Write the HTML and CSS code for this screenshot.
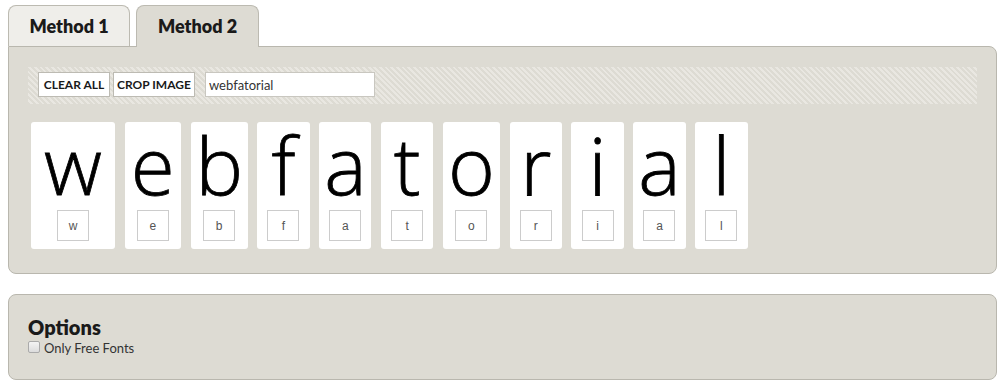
FILE: index.html
```html
<!DOCTYPE html>
<html>
<head>
<meta charset="utf-8">
<link rel="stylesheet" href="styles.css">
</head>
<body>
<div class="tabs">
  <div class="tab">Method 1</div>
  <div class="tab active">Method 2</div>
</div>
<div class="panel main">
  <div class="toolbar">
    <button class="btn btn-clear">CLEAR ALL</button>
    <button class="btn btn-crop">CROP IMAGE</button>
    <input class="txt" type="text" value="webfatorial">
  </div>
  <div class="cards">
    <div class="card c-w"><div class="big">w</div><div class="small">w</div></div>
    <div class="card c-e"><div class="big">e</div><div class="small">e</div></div>
    <div class="card c-b"><div class="big">b</div><div class="small">b</div></div>
    <div class="card"><div class="big">f</div><div class="small">f</div></div>
    <div class="card"><div class="big">a</div><div class="small">a</div></div>
    <div class="card"><div class="big">t</div><div class="small">t</div></div>
    <div class="card c-o"><div class="big">o</div><div class="small">o</div></div>
    <div class="card"><div class="big">r</div><div class="small">r</div></div>
    <div class="card"><div class="big">i</div><div class="small">i</div></div>
    <div class="card"><div class="big">a</div><div class="small">a</div></div>
    <div class="card"><div class="big">l</div><div class="small">l</div></div>
  </div>
</div>
<div class="panel options">
  <h2 class="opt-title">Options</h2>
  <label class="opt"><span class="cb"></span>Only Free Fonts</label>
</div>
</body>
</html>
```
FILE: styles.css
```css
* { box-sizing: border-box; }
html, body { margin: 0; padding: 0; background: #fff; }
body {
  padding: 5px 9px 0 8px;
  font-family: "Lato", "Open Sans", sans-serif;
  color: #222;
}
.tabs { display: flex; gap: 6px; height: 41px; position: relative; z-index: 2; }
.tab {
  width: 122px;
  height: 42px;
  border: 1px solid #bcbab1;
  border-bottom: none;
  border-radius: 8px 8px 0 0;
  background: #efeeea;
  font-weight: 800;
  font-size: 18px;
  text-align: center;
  padding-top: 9px;
  color: #1a1a1a;
}
.tab.active { width: 123px; background: #dddbd3; height: 42px; }
.tab:first-child { height: 41px; }
.panel {
  background: #dddbd3;
  border: 1px solid #b9b7ae;
  border-radius: 8px;
}
.main {
  border-top-left-radius: 0;
  height: 228px;
  padding: 20px 19px 0 19px;
}
.toolbar {
  height: 37px;
  padding: 5px 10px;
  display: flex;
  align-items: flex-start;
  background: repeating-linear-gradient(45deg, #dddbd3 0px, #dddbd3 2px, #e9e7e1 2px, #e9e7e1 4px);
}
.btn {
  height: 25px;
  background: #fff;
  border: 1px solid #bdbbb3;
  font-family: "Lato", sans-serif;
  font-weight: 700;
  font-size: 12px;
  color: #1a1a1a;
  padding: 0;
  margin: 0 3px 0 0;
  text-align: center;
}
.btn-clear { width: 72px; }
.btn-crop { width: 82px; margin-right: 10px; }
.txt {
  width: 170px;
  height: 25px;
  border: 1px solid #c9c7c0;
  font-family: "Lato", sans-serif;
  font-size: 13px;
  color: #333;
  padding: 0 3px;
  outline: none;
}
.cards {
  display: flex;
  gap: 9.6px;
  margin-top: 18px;
  padding-left: 3px;
}
.card {
  width: 52.3px;
  height: 127px;
  background: #fff;
  border-radius: 3px;
  display: flex;
  flex-direction: column;
  align-items: center;
}
.c-w { width: 84px; }
.c-e { width: 56.5px; }
.c-b { width: 57px; }
.c-o { width: 57px; }
.big {
  font-family: "Open Sans", sans-serif;
  font-weight: 300;
  font-size: 80px;
  line-height: 80px;
  height: 86px;
  color: #000;
  margin-top: 2px;
  -webkit-text-stroke: 0.8px #000;
}
.small {
  width: 32px;
  height: 31px;
  border: 1px solid #cccccc;
  font-family: "Liberation Sans", Arial, sans-serif;
  font-size: 12px;
  color: #555;
  display: flex;
  align-items: center;
  justify-content: center;
}
.options {
  margin-top: 20px;
  height: 86px;
  padding: 21px 19px;
}
.opt-title {
  margin: 0;
  font-size: 20px;
  font-weight: 800;
  line-height: 22px;
  color: #1a1a1a;
}
.opt {
  display: flex;
  align-items: center;
  font-size: 13px;
  color: #333;
  line-height: 16px;
  margin-top: 2px;
}
.cb {
  width: 12px;
  height: 12px;
  border: 1px solid #aaa;
  border-radius: 2px;
  background: linear-gradient(#f4f4f4, #dcdcdc);
  margin-right: 4px;
  margin-top: -3px;
}
```
